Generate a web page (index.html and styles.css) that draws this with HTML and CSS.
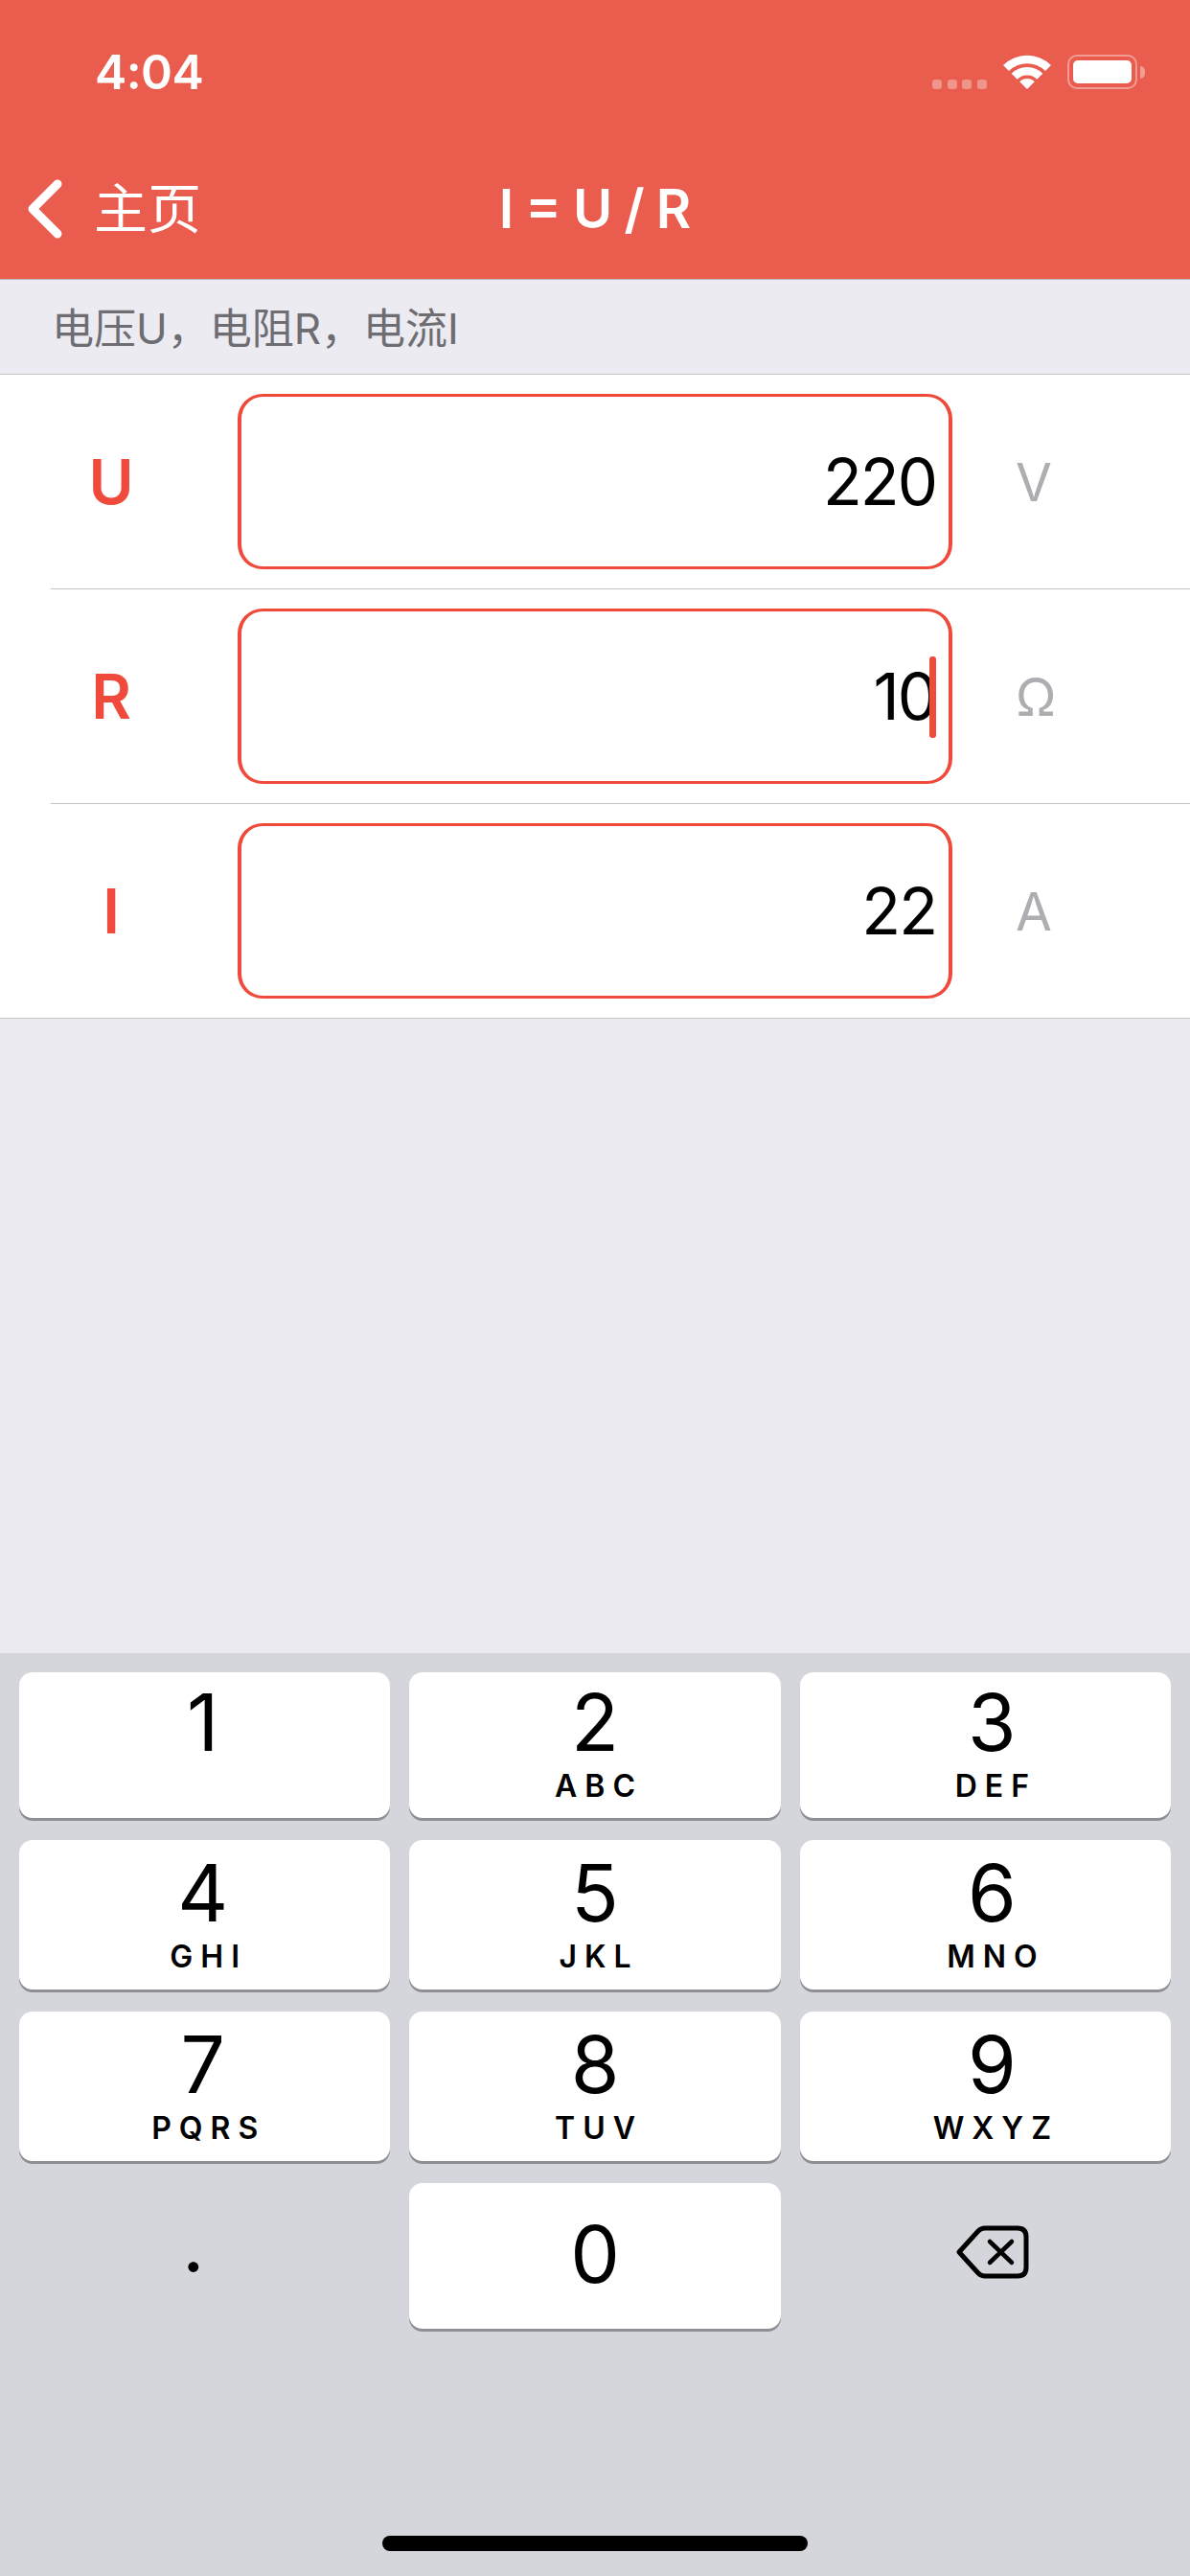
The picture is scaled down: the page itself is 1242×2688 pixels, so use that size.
FILE: index.html
```html
<!DOCTYPE html>
<html>
<head>
    <title>I = U / R</title>
    <link rel="stylesheet" href="styles.css">
</head>
<body>
    <div class="screen">
        <header class="top">
            <div class="status">
                <span class="time">4:04</span>
                <div class="status-icons">
                    <div class="signal"><i></i><i></i><i></i><i></i></div>
                    <svg class="wifi" viewBox="0 0 50 36">
                        <path d="M0 11 A35.5 35.5 0 0 1 50 11 L44 17 A27 27 0 0 0 6 17 Z"/>
                        <path d="M8.7 19.7 A23 23 0 0 1 41.3 19.7 L35.3 25.8 A14.5 14.5 0 0 0 14.7 25.8 Z"/>
                        <path d="M17.2 28.2 A11 11 0 0 1 32.8 28.2 L25 36 Z"/>
                    </svg>
                    <div class="battery"><div class="battery-fill"></div></div>
                    <div class="battery-nub"></div>
                </div>
            </div>
            <nav class="nav">
                <div class="back">
                    <svg class="chevron" viewBox="0 0 38 62">
                        <path d="M32 5 L6 31 L32 57"/>
                    </svg>
                    <span>主页</span>
                </div>
                <h1>I = U / R</h1>
            </nav>
        </header>

        <p class="hint">电压U，电阻R，电流I</p>

        <div class="list">
            <div class="row">
                <span class="name">U</span>
                <div class="field">220</div>
                <span class="unit">V</span>
            </div>
            <div class="row">
                <span class="name">R</span>
                <div class="field">10<span class="caret"></span></div>
                <span class="unit">Ω</span>
            </div>
            <div class="row">
                <span class="name">I</span>
                <div class="field">22</div>
                <span class="unit">A</span>
            </div>
        </div>

        <div class="spacer"></div>

        <div class="keyboard">
            <div class="keys">
                <div class="key"><span class="digit">1</span></div>
                <div class="key"><span class="digit">2</span><span class="letters">ABC</span></div>
                <div class="key"><span class="digit">3</span><span class="letters">DEF</span></div>
                <div class="key"><span class="digit">4</span><span class="letters">GHI</span></div>
                <div class="key"><span class="digit">5</span><span class="letters">JKL</span></div>
                <div class="key"><span class="digit">6</span><span class="letters">MNO</span></div>
                <div class="key"><span class="digit">7</span><span class="letters">PQRS</span></div>
                <div class="key"><span class="digit">8</span><span class="letters">TUV</span></div>
                <div class="key"><span class="digit">9</span><span class="letters">WXYZ</span></div>
                <div class="key flat dot"><span class="digit">.</span></div>
                <div class="key zero"><span class="digit">0</span></div>
                <div class="key flat erase">
                    <svg class="backspace" viewBox="0 0 76 56">
                        <path class="tag" d="M30 3 H64 Q73 3 73 12 V44 Q73 53 64 53 H30 Q26 53 23 50 L3 28 L23 6 Q26 3 30 3 Z"/>
                        <path class="cross" d="M35 17 L58 39 M58 17 L35 39"/>
                    </svg>
                </div>
            </div>
            <div class="home-bar"></div>
        </div>
    </div>
</body>
</html>
```

FILE: styles.css
```css
html, body {
    margin: 0;
    padding: 0;
    background-color: #ebebf1;
    font-family: Inter, "Noto Sans CJK SC", sans-serif;
}
.screen {
    display: flex;
    flex-direction: column;
    height: 2688px;
    overflow: hidden;
}

/* Status bar and nav bar share the red header. */
.top {
    height: 291px;
    background-color: #e95c4e;
    border-bottom: 1px solid #b9b5ba;
    color: white;
}
.status {
    display: flex;
    justify-content: space-between;
    height: 132px;
    padding: 0 47px 0 99px;
}
.time {
    margin-top: 44px;
    font-size: 50px;
    line-height: 62px;
    font-weight: 600;
    letter-spacing: -0.6px;
}
.status-icons {
    display: flex;
    align-items: flex-start;
    padding-top: 57px;
}
.signal {
    display: flex;
    gap: 5.6px;
    margin: 26px 17px 0 0;
}
.signal i {
    width: 10px;
    height: 10px;
    border-radius: 3px;
    background-color: rgba(255, 255, 255, 0.35);
}
.wifi {
    width: 50px;
    height: 36px;
    margin-right: 17px;
    fill: white;
}
.battery {
    box-sizing: border-box;
    width: 73px;
    height: 36px;
    padding: 4px;
    border: 2px solid rgba(255, 255, 255, 0.4);
    border-radius: 10px;
}
.battery-fill {
    height: 100%;
    border-radius: 5px;
    background-color: white;
}
.battery-nub {
    width: 5px;
    height: 13px;
    margin: 12px 0 0 3px;
    border-radius: 0 7px 7px 0;
    background-color: rgba(255, 255, 255, 0.4);
}
.nav {
    display: grid;
    grid-template-columns: 1fr auto 1fr;
    align-items: center;
    box-sizing: border-box;
    height: 159px;
    padding-top: 12px;
}
.back {
    display: flex;
    align-items: center;
    gap: 32px;
    padding-left: 28px;
    font-size: 56px;
    line-height: 62px;
}
.chevron {
    width: 38px;
    height: 62px;
    fill: none;
    stroke: white;
    stroke-width: 9;
    stroke-linecap: round;
    stroke-linejoin: round;
}
.nav h1 {
    margin: 0;
    font-size: 56px;
    line-height: 62px;
    font-weight: 600;
    word-spacing: -2px;
}

.hint {
    box-sizing: border-box;
    height: 99px;
    margin: 0;
    padding: 23px 0 0 54px;
    border-bottom: 1px solid #c4c4c6;
    font-size: 44px;
    line-height: 56px;
    color: #6d6d72;
}

.list {
    border-bottom: 1px solid #c4c4c6;
    background-color: white;
}
.row {
    display: grid;
    grid-template-columns: 126px 746px 1fr;
    column-gap: 69px;
    align-items: center;
    height: 223px;
    margin-left: 53px;
    border-bottom: 1px solid #c4c4c6;
}
.row:last-child {
    border-bottom: none;
}
.name {
    text-align: center;
    font-size: 64px;
    font-weight: 600;
    color: #ef4a3c;
}
.field {
    position: relative;
    box-sizing: border-box;
    height: 183px;
    padding-right: 13px;
    border: solid #ef4a3c;
    border-width: 3px 4px;
    border-radius: 26px;
    font-size: 67px;
    line-height: 177px;
    letter-spacing: -2px;
    text-align: right;
    color: black;
}
.caret {
    position: absolute;
    right: 13px;
    top: 47px;
    width: 7px;
    height: 85px;
    border-radius: 3px;
    background-color: #ef4a3c;
}
.unit {
    margin-left: -3px;
    font-size: 55px;
    color: #aeaeb2;
}

.spacer {
    flex: 1;
}

.keyboard {
    display: flex;
    flex-direction: column;
    height: 963px;
    box-sizing: border-box;
    padding: 20px 20px 26px;
    background-color: #d5d6db;
}
.keys {
    display: grid;
    grid-template-columns: repeat(3, 1fr);
    grid-template-rows: 152px 156px 156px 152px;
    gap: 23px 20px;
}
.key {
    display: flex;
    flex-direction: column;
    align-items: center;
    padding-top: 8px;
    border-radius: 14px;
    background-color: white;
    box-shadow: 0 3px 0 #8e8f94;
    color: black;
}
.key:nth-child(n+4) {
    padding-top: 11px;
}
/* The third column's labels sit a little right of centre. */
.key:nth-child(3n) {
    padding-left: 14px;
}
.digit {
    font-size: 82px;
    line-height: 90px;
}
.key:nth-child(3n+1) .digit {
    margin-right: 4px;
}
.letters {
    margin-top: 1px;
    margin-right: -8px;
    font-size: 32px;
    line-height: 40px;
    font-weight: 600;
    letter-spacing: 8px;
}
.key.zero {
    padding-top: 30px;
}
.key.flat {
    background: none;
    box-shadow: none;
}
.key.dot {
    align-items: flex-start;
    padding: 18px 0 0 170px;
}
.key.erase {
    align-items: flex-start;
    padding: 44px 0 0 163px;
}
.backspace {
    width: 76px;
    height: 56px;
    fill: none;
    stroke: black;
    stroke-linecap: round;
    stroke-linejoin: round;
}
.backspace .tag {
    stroke-width: 5;
}
.backspace .cross {
    stroke-width: 4.5;
}
.home-bar {
    width: 444px;
    height: 16px;
    margin: auto auto 0;
    border-radius: 8px;
    background-color: black;
}
```
